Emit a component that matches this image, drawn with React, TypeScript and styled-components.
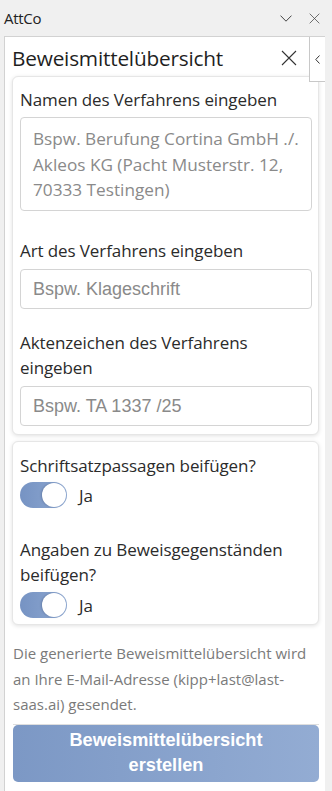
import styled, { createGlobalStyle } from "styled-components";

const GlobalStyle = createGlobalStyle`
  html, body {
    margin: 0;
    padding: 0;
    background: #f0f0f0;
  }
  * { box-sizing: border-box; }
`;

const UI_FONT = `"Open Sans", "Noto Sans", sans-serif`;

const Page = styled.div`
  width: 332px;
  height: 791px;
  display: flex;
  flex-direction: column;
  background: #f0f0f0;
  font-family: ${UI_FONT};
  overflow: hidden;
`;

const TopBar = styled.div`
  height: 36px;
  flex: none;
  display: flex;
  align-items: center;
  padding: 0 12px 0 4px;
  color: #222;
`;

const AppName = styled.span`
  font-size: 15px;
  letter-spacing: -0.3px;
  flex: 1;
`;

const BarIcons = styled.div`
  display: flex;
  gap: 17px;
  align-items: center;
`;

const Pane = styled.div`
  position: relative;
  flex: 1;
  margin: 0 7px 0 4px;
  background: #fff;
  border-top: 1px solid #d2d2d2;
  border-left: 1px solid #d2d2d2;
  display: flex;
  flex-direction: column;
`;

const PaneHeader = styled.div`
  height: 39px;
  display: flex;
  align-items: center;
  padding: 2px 28px 0 7px;
`;

const PaneTitle = styled.h1`
  flex: 1;
  margin: 0;
  font-size: 20.8px;
  font-weight: 400;
  color: #1f1f1f;
  letter-spacing: -0.2px;
`;

const CollapseTab = styled.div`
  position: absolute;
  top: 0;
  right: 0;
  width: 16px;
  height: 45px;
  background: #fff;
  border-left: 1px solid #c8c8c8;
  border-bottom: 1px solid #c8c8c8;
  display: flex;
  align-items: center;
  justify-content: center;
`;

const Content = styled.div`
  display: flex;
  flex-direction: column;
  gap: 6px;
  padding: 0 6px 0 7px;
`;

const Card = styled.div<{ $pad: string }>`
  background: #fff;
  border: 1px solid #e6e6e6;
  border-radius: 6px;
  box-shadow: 0 1px 4px rgba(0, 0, 0, 0.12);
  padding: ${(p) => p.$pad};
  display: flex;
  flex-direction: column;
`;

const Label = styled.div<{ $gap?: number }>`
  font-size: 17px;
  line-height: 25px;
  color: #2b2b2b;
  letter-spacing: -0.1px;
  margin-top: ${(p) => p.$gap ?? 0}px;
`;

const TextArea = styled.div`
  margin-top: 5px;
  height: 94px;
  border: 1px solid #d4d4d4;
  border-radius: 4px;
  padding: 8px 12px;
  font-size: 17.2px;
  line-height: 25.5px;
  color: #8a8a8a;
`;

const Input = styled.div<{ $gap?: number }>`
  margin-top: ${(p) => p.$gap ?? 6}px;
  height: 40px;
  border: 1px solid #d4d4d4;
  border-radius: 4px;
  padding: 0 12px;
  display: flex;
  align-items: center;
  font-family: "Liberation Sans", Arial, sans-serif;
  font-size: 18px;
  color: #8a8a8a;
`;

const ToggleRow = styled.div<{ $gap: number }>`
  display: flex;
  align-items: center;
  gap: 12px;
  margin-top: ${(p) => p.$gap}px;
`;

const Track = styled.div`
  position: relative;
  width: 47px;
  height: 26px;
  border-radius: 13px;
  background: linear-gradient(90deg, #7693c3, #8ea8d1);
`;

const Knob = styled.div`
  position: absolute;
  top: 1px;
  right: 1px;
  width: 24px;
  height: 24px;
  border-radius: 50%;
  background: #fff;
  box-shadow: -1px 0 2px rgba(60, 80, 120, 0.35);
`;

const ToggleText = styled.span`
  font-size: 17px;
  color: #2b2b2b;
`;

const Info = styled.p`
  margin: 16px 0 0 1px;
  font-size: 15px;
  line-height: 25.5px;
  color: #7a7a7a;
  padding-bottom: 6px;
  border-bottom: 1px solid #dedede;
`;

const SubmitButton = styled.button`
  margin: -6px 0 0 1px;
  height: 57px;
  border: none;
  border-radius: 5px;
  background: linear-gradient(90deg, #7c98c5, #93acd3);
  color: #fff;
  font-family: "Liberation Sans", Arial, sans-serif;
  font-weight: 700;
  font-size: 18.2px;
  line-height: 25px;
  padding: 3px 30px;
`;

const Toggle = ({ label, gap }: { label: string; gap: number }) => (
  <ToggleRow $gap={gap}>
    <Track>
      <Knob />
    </Track>
    <ToggleText>{label}</ToggleText>
  </ToggleRow>
);

const ThinX = ({ size, color }: { size: number; color: string }) => (
  <svg width={size} height={size} viewBox="0 0 16 16">
    <path d="M1 1L15 15M15 1L1 15" stroke={color} strokeWidth="1.1" fill="none" />
  </svg>
);

const App = () => {
  return (
    <>
      <GlobalStyle />
      <Page>
        <TopBar>
          <AppName>AttCo</AppName>
          <BarIcons>
            <svg width="12" height="7" viewBox="0 0 12 7">
              <path d="M0.5 0.6L6 6.2L11.5 0.6" stroke="#444" strokeWidth="1" fill="none" />
            </svg>
            <ThinX size={11} color="#444" />
          </BarIcons>
        </TopBar>
        <Pane>
          <CollapseTab>
            <svg width="5" height="9" viewBox="0 0 5 9">
              <path d="M4.5 0.5L0.8 4.5L4.5 8.5" stroke="#333" strokeWidth="1" fill="none" />
            </svg>
          </CollapseTab>
          <PaneHeader>
            <PaneTitle>Beweismittelübersicht</PaneTitle>
            <ThinX size={16} color="#333" />
          </PaneHeader>
          <Content>
            <Card $pad="10px 6px 8px 7px">
              <Label>Namen des Verfahrens eingeben</Label>
              <TextArea>
                Bspw. Berufung Cortina GmbH ./. Akleos KG (Pacht Musterstr. 12, 70333 Testingen)
              </TextArea>
              <Label $gap={27}>Art des Verfahrens eingeben</Label>
              <Input>Bspw. Klageschrift</Input>
              <Label $gap={21}>Aktenzeichen des Verfahrens eingeben</Label>
              <Input $gap={6}>Bspw. TA 1337 /25</Input>
            </Card>
            <Card $pad="11px 6px 6px 7px">
              <Label>Schriftsatzpassagen beifügen?</Label>
              <Toggle label="Ja" gap={4} />
              <Label $gap={29}>Angaben zu Beweisgegenständen beifügen?</Label>
              <Toggle label="Ja" gap={5} />
            </Card>
          </Content>
          <Content>
            <Info>
              Die generierte Beweismittelübersicht wird an Ihre E-Mail-Adresse
              (kipp+last@last-saas.ai) gesendet.
            </Info>
            <SubmitButton>Beweismittelübersicht erstellen</SubmitButton>
          </Content>
        </Pane>
      </Page>
    </>
  );
};

export default App;
